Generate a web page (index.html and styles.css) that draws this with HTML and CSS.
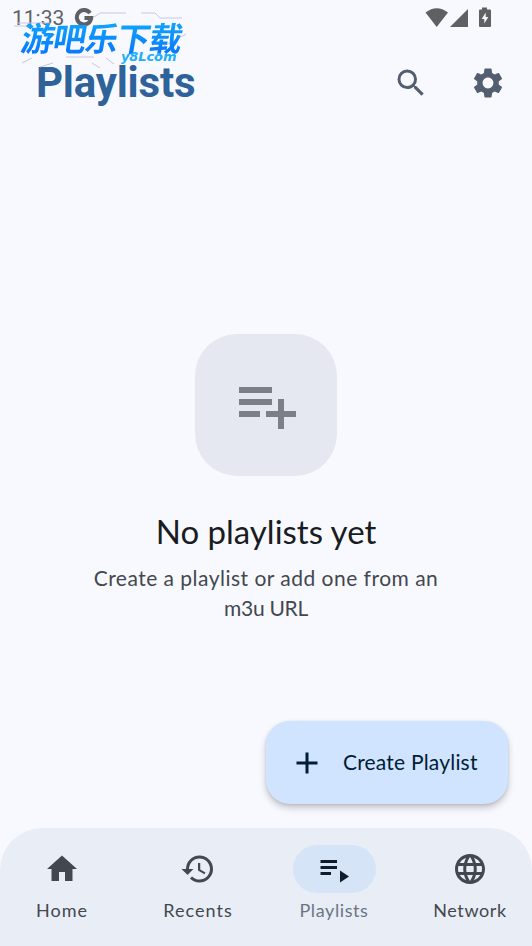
FILE: index.html
```html
<!DOCTYPE html>
<html lang="en">
<head>
<meta charset="utf-8">
<title>Playlists</title>
<link rel="stylesheet" href="styles.css">
</head>
<body>
<div class="app">
  <div class="status">
    <span class="time">11:33</span>
    <svg class="g-logo" viewBox="0 0 20 20"><path d="M16 5.2A7.2 7.2 0 1 0 17.2 10H10.5" /></svg>
    <svg class="signals" viewBox="0 0 70 28">
      <path d="M.5 12.500Q11.800 4 23 12.500L11.700 27z"/>
      <path d="M25 27L43 9V27z"/>
      <path fill-rule="evenodd" d="M57 7.500h5v2h3q1 0 1 1V26q0 1-1 1H55q-1 0-1-1V10.500q0-1 1-1h2zM60.700 12.500l-4 6.500h2.600v4.500l4-6.500h-2.600z"/>
    </svg>
  </div>
  <div class="watermark">
    <svg class="circuit" viewBox="0 0 180 60">
      <path d="M4 14H36M0 17H20M80 8l6-4H112M127 4h14l5 5h22M8 54l10-5M26 58l13-4M52 48H80M78 54l8 5M150 37l22-12M92 49l8 6"/>
    </svg>
    <span class="mark">游吧乐下载</span>
    <span class="site">y8Lcom</span>
  </div>
  <header class="header">
    <h1 class="title">Playlists</h1>
    <svg class="icon" viewBox="0 0 24 24" fill="currentColor"><path d="M15.500 14h-.79l-.28-.27A6.471 6.471 0 0 0 16 9.500 6.500 6.500 0 1 0 9.500 16c1.610 0 3.090-.59 4.230-1.570l.27.28v.79l5 4.990L20.490 19l-4.990-5zm-6 0C7.010 14 5 11.990 5 9.500S7.010 5 9.500 5 14 7.010 14 9.500 11.990 14 9.500 14z"/></svg>
    <svg class="icon" viewBox="0 0 24 24" fill="currentColor"><path d="M19.140 12.940c.04-.3.060-.61.060-.94 0-.32-.02-.64-.07-.94l2.030-1.580c.18-.14.230-.41.120-.61l-1.920-3.320c-.12-.22-.37-.29-.59-.22l-2.390.96c-.5-.38-1.030-.7-1.620-.94l-.36-2.540c-.04-.24-.24-.41-.48-.41h-3.840c-.24 0-.43.170-.47.410l-.36 2.540c-.59.240-1.130.570-1.620.940l-2.390-.96c-.22-.08-.47 0-.59.220L2.740 8.870c-.12.210-.08.470.120.610l2.030 1.580c-.05.300-.09.630-.09.940s.02.640.070.940l-2.030 1.580c-.18.140-.23.410-.12.610l1.920 3.320c.12.220.370.290.590.220l2.390-.96c.5.380 1.030.7 1.620.940l.36 2.540c.05.240.24.410.480.410h3.840c.24 0 .44-.17.470-.41l.36-2.540c.59-.24 1.130-.56 1.620-.94l2.390.96c.22.080.470 0 .59-.22l1.920-3.320c.12-.22.070-.47-.12-.61l-2.010-1.580zM12 15.600c-1.980 0-3.600-1.620-3.600-3.600s1.620-3.600 3.600-3.600 3.600 1.620 3.600 3.600-1.620 3.600-3.600 3.600z"/></svg>
  </header>
  <main class="empty">
    <div class="tile"><svg class="tile-icon" viewBox="0 0 24 24" fill="currentColor"><path d="M3 10h11v2H3zM3 6h11v2H3zM3 14h7v2H3zM16 10h2v4h4v2h-4v4h-2v-4h-4v-2h4z"/></svg></div>
    <h2 class="empty-title">No playlists yet</h2>
    <p class="empty-text"><span class="line">Create a playlist or add one from an</span> <span class="line second">m3u URL</span></p>
  </main>
  <div class="actions">
    <button class="fab"><svg class="plus" viewBox="0 0 24 24" fill="currentColor"><path d="M19 13h-6v6h-2v-6H5v-2h6V5h2v6h6z"/></svg><span class="fab-label">Create Playlist</span></button>
  </div>
  <nav class="nav">
    <a class="item"><span class="pill"><svg class="nav-icon" viewBox="0 0 24 24" fill="currentColor"><path d="M10 20v-6h4v6h5v-8h3L12 3 2 12h3v8z"/></svg></span><span class="label home">Home</span></a>
    <a class="item"><span class="pill"><svg class="nav-icon" viewBox="0 0 24 24" fill="currentColor"><path d="M13 3a9 9 0 0 0-9 9H1l3.890 3.890.070.140L9 12H6c0-3.870 3.130-7 7-7s7 3.130 7 7-3.130 7-7 7c-1.930 0-3.680-.79-4.940-2.060l-1.420 1.420A8.954 8.954 0 0 0 13 21a9 9 0 0 0 0-18zm-1 5v5l4.280 2.540.720-1.210-3.500-2.080V8z"/></svg></span><span class="label recents">Recents</span></a>
    <a class="item active"><span class="pill"><svg class="nav-icon" viewBox="0 0 24 24" fill="currentColor"><path d="M3 10h11v2H3zM3 6h11v2H3zM3 14h7v2H3zM16 13v8l6-4z"/></svg></span><span class="label lists">Playlists</span></a>
    <a class="item"><span class="pill"><svg class="nav-icon" viewBox="0 0 24 24" fill="currentColor"><path d="M11.990 2C6.470 2 2 6.480 2 12s4.470 10 9.990 10C17.520 22 22 17.520 22 12S17.520 2 11.990 2zm6.930 6h-2.950a15.650 15.650 0 0 0-1.380-3.560A8.030 8.030 0 0 1 18.920 8zM12 4.040c.83 1.200 1.480 2.530 1.910 3.960h-3.820c.43-1.430 1.080-2.760 1.910-3.960zM4.260 14C4.100 13.360 4 12.690 4 12s.1-1.360.26-2h3.380c-.08.660-.14 1.320-.14 2s.06 1.340.140 2H4.260zm.82 2h2.950c.32 1.250.780 2.450 1.380 3.560A7.987 7.987 0 0 1 5.080 16zm2.950-8H5.080a7.987 7.987 0 0 1 4.330-3.560A15.650 15.650 0 0 0 8.030 8zM12 19.960c-.83-1.200-1.480-2.530-1.910-3.960h3.820c-.43 1.430-1.080 2.760-1.910 3.960zM14.340 14H9.660c-.09-.66-.16-1.320-.16-2s.07-1.350.160-2h4.680c.09.650.160 1.320.160 2s-.07 1.340-.16 2zm.25 5.560c.6-1.110 1.060-2.310 1.380-3.560h2.950a8.030 8.030 0 0 1-4.330 3.560zM16.360 14c.08-.66.140-1.320.14-2s-.06-1.340-.14-2h3.380c.16.640.260 1.310.260 2s-.1 1.360-.26 2h-3.380z"/></svg></span><span class="label network">Network</span></a>
  </nav>
</div>
</body>
</html>
```
FILE: styles.css
```css
* { box-sizing: border-box; }
body { margin: 0; background: #f8f9ff; font-family: Lato, "Noto Sans CJK SC", sans-serif; color: #191c20; }
.app { position: relative; width: 532px; height: 946px; display: flex; flex-direction: column; overflow: hidden; }
svg { display: block; flex: none; }

.status { height: 36px; display: flex; align-items: flex-start; padding: 0 37px 0 12px; color: #5f6062; }
.time { font: 21px/37px Roboto, sans-serif; width: 62px; }
.g-logo { width: 20px; height: 20px; margin-top: 8px; fill: none; stroke: #5f6062; stroke-width: 4; }
.signals { width: 70px; height: 28px; margin-left: auto; fill: #5f6062; }

.watermark { position: absolute; left: 14px; top: 9px; width: 180px; height: 60px; }
.circuit { position: absolute; inset: 0; fill: none; stroke: #c9c5e9; stroke-width: 1; }
.mark { position: absolute; left: 8px; top: 11px; font: 700 33px/34px "Noto Sans CJK SC", sans-serif; white-space: nowrap; color: transparent; background: linear-gradient(#12a8ff, #0878fa); background-clip: text; -webkit-background-clip: text; transform: skewX(-10deg); letter-spacing: -1px; }
.site { position: absolute; left: 107px; top: 41px; font: italic 700 13px/14px "DejaVu Sans", sans-serif; color: #20aefa; letter-spacing: -.1px; }

.header { height: 93px; display: flex; align-items: center; padding: 0 26px 0 36px; color: #535f70; }
.title { margin: 0 auto 0 0; font: 700 42px/50px Roboto, sans-serif; color: #2e6299; letter-spacing: -.2px; }
.icon { width: 36px; height: 36px; }
.icon + .icon { margin-left: 41px; }

.empty { flex: 1; display: flex; flex-direction: column; align-items: center; padding-top: 205px; }
.tile { width: 142px; height: 142px; border-radius: 42px; background: #e5e8f1; display: grid; place-items: center; color: #7c7f88; }
.tile-icon { width: 72px; height: 72px; }
.empty-title { margin: 34px 0 0; font-size: 33px; line-height: 42px; font-weight: 400; white-space: nowrap; }
.empty-text { margin: 11px 0 0; font-size: 21px; line-height: 30px; color: #43474e; text-align: center; }
.line { display: block; white-space: nowrap; letter-spacing: .48px; }
.second { letter-spacing: -.3px; }

.actions { display: flex; justify-content: flex-end; padding: 0 24px 24px 0; }
.fab { width: 242px; height: 83px; border: 0; border-radius: 24px; background: #d0e4ff; color: #001d34; display: flex; align-items: center; padding: 0 0 0 23px; font: 21px/30px Lato, sans-serif; box-shadow: 0 4px 7px rgba(0,0,0,.2), 0 1px 3px rgba(0,0,0,.1); }
.plus { width: 36px; height: 36px; margin-right: 18px; }
.fab-label { white-space: nowrap; letter-spacing: .2px; margin-bottom: 2px; }

.nav { height: 118px; background: #e9eef6; border-radius: 42px 42px 0 0; display: flex; gap: 12px; padding-top: 17px; color: #43474e; }
.item { flex: 1; display: flex; flex-direction: column; align-items: center; }
.pill { width: 83px; height: 48px; border-radius: 24px; display: grid; place-items: center; }
.nav-icon { width: 36px; height: 36px; }
.active .pill { background: #d6e4f7; color: #101c2b; }
.active .label { color: #6b7585; }
.label { font-size: 18px; line-height: 24px; margin-top: 5px; letter-spacing: .6px; white-space: nowrap; }
.recents { letter-spacing: 1.05px; }
.home { letter-spacing: 1px; }
```
